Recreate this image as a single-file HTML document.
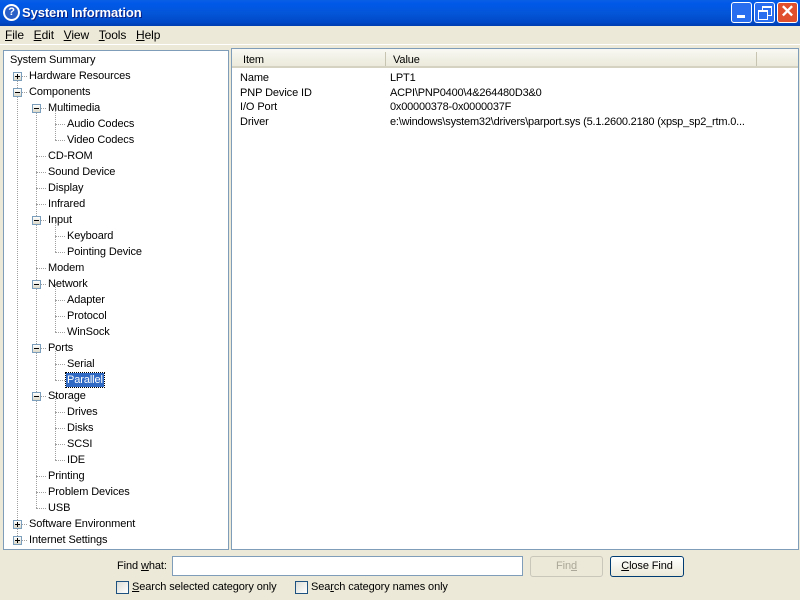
<!DOCTYPE html><html><head><style>
body{margin:0;width:800px;height:600px;overflow:hidden;background:#ece9d8;font-family:"Liberation Sans",sans-serif;font-size:11px;letter-spacing:-0.1px;position:relative}
.a{position:absolute;white-space:nowrap}
#title{left:0;top:0;width:800px;height:26px;background:linear-gradient(#0a5fe6,#0058e8 15%,#0456d8 50%,#0049c8 85%,#003cb0);}
.tb{position:absolute;top:2px;width:21px;height:21px;border:1px solid #fff;border-radius:3px;box-sizing:border-box}
.row{position:absolute;height:16px;line-height:16px}
.box{position:absolute;width:9px;height:9px;border:1px solid #7b9ebd;background:linear-gradient(#fff,#dcd8c8);box-sizing:border-box}
.box:after{content:"";position:absolute;left:1px;top:3px;width:5px;height:1px;background:#000}
.plus:before{content:"";position:absolute;left:3px;top:1px;width:1px;height:5px;background:#000}
.h{position:absolute;height:0;border-top:1px dotted #a0a0a0}
.v{position:absolute;width:0;border-left:1px dotted #a0a0a0}
.cb{position:absolute;width:13px;height:13px;border:1px solid #1c5180;background:linear-gradient(135deg,#dcdcd7,#fff);box-sizing:border-box}
u{text-decoration:underline}
</style></head><body>
<div id="title" class="a"></div>
<div class="a" style="left:3px;top:4px;width:17px;height:17px;border-radius:50%;background:#fff;"><div style="position:absolute;left:2px;top:2px;width:13px;height:13px;border-radius:50%;background:#2a5fc8;color:#fff;font-weight:bold;font-size:11px;text-align:center;line-height:13px">?</div></div>
<div class="a" style="left:22px;top:5px;color:#fff;font-size:13px;font-weight:bold;text-shadow:1px 1px #0a1e80">System Information</div>
<div class="tb" style="left:731px;background:#2a6ef0"><div style="position:absolute;left:5px;top:12px;width:8px;height:3px;background:#fff"></div></div>
<div class="tb" style="left:754px;background:#2a6ef0"><div style="position:absolute;left:7px;top:3px;width:8px;height:7px;border:1px solid #fff;border-top-width:2px"></div><div style="position:absolute;left:3px;top:7px;width:8px;height:7px;border:1px solid #fff;border-top-width:2px;background:#2a6ef0"></div></div>
<div class="tb" style="left:777px;background:#e0502c;color:#fff;font-size:17px;font-weight:bold;text-align:center;line-height:18px">✕</div>
<div class="a" style="left:5px;top:28px;font-size:12px"><u>F</u>ile&nbsp;&nbsp;&nbsp;<u>E</u>dit&nbsp;&nbsp;&nbsp;<u>V</u>iew&nbsp;&nbsp;&nbsp;<u>T</u>ools&nbsp;&nbsp;&nbsp;<u>H</u>elp</div>
<div class="a" style="left:0;top:44px;width:800px;height:1px;background:#fff"></div>
<div class="a" style="left:3px;top:50px;width:226px;height:500px;background:#fff;border:1px solid #7f9db9;box-sizing:border-box"></div>
<div class="a" style="left:231px;top:48px;width:568px;height:502px;background:#fff;border:1px solid #7f9db9;box-sizing:border-box"></div>
<div class="a" style="left:232px;top:49px;width:566px;height:19px;background:linear-gradient(#f9f8f3,#ebeadb);border-bottom:2px solid #d6d2c2;box-sizing:border-box"></div>
<div class="a" style="left:385px;top:52px;width:1px;height:14px;background:#c7c5b2"></div>
<div class="a" style="left:756px;top:52px;width:1px;height:14px;background:#c7c5b2"></div>
<div class="a" style="left:243px;top:54px">Item</div><div class="a" style="left:393px;top:54px">Value</div>
<div class="a" style="left:240px;top:71px;line-height:14.5px">Name<br>PNP Device ID<br>I/O Port<br>Driver</div>
<div class="a" style="left:390px;top:71px;line-height:14.5px;letter-spacing:-0.2px">LPT1<br>ACPI\PNP0400\4&amp;264480D3&amp;0<br>0x00000378-0x0000037F<br>e:\windows\system32\drivers\parport.sys (5.1.2600.2180 (xpsp_sp2_rtm.0...</div>
<div id="tree"></div>
<script>
var R=[[0,"System Summary",""],[1,"Hardware Resources","+"],[1,"Components","-"],[2,"Multimedia","-"],[3,"Audio Codecs"],[3,"Video Codecs"],[2,"CD-ROM"],[2,"Sound Device"],[2,"Display"],[2,"Infrared"],[2,"Input","-"],[3,"Keyboard"],[3,"Pointing Device"],[2,"Modem"],[2,"Network","-"],[3,"Adapter"],[3,"Protocol"],[3,"WinSock"],[2,"Ports","-"],[3,"Serial"],[3,"Parallel"],[2,"Storage","-"],[3,"Drives"],[3,"Disks"],[3,"SCSI"],[3,"IDE"],[2,"Printing"],[2,"Problem Devices"],[2,"USB"],[1,"Software Environment","+"],[1,"Internet Settings","+"]];
var h="";var cx=[0,17,36,55],tx=[10,29,48,67];
h+='<div class="v" style="left:17px;top:76px;height:464px"></div>';
h+='<div class="v" style="left:36px;top:108px;height:400px"></div>';
[[3,5],[10,12],[14,17],[18,20],[21,25]].forEach(function(p){h+='<div class="v" style="left:55px;top:'+(60+16*p[0])+'px;height:'+(16*(p[1]-p[0]))+'px"></div>'});
R.forEach(function(r,i){var y=60+16*i,l=r[0];
if(l>0){h+='<div class="h" style="left:'+cx[l]+'px;top:'+y+'px;width:'+(tx[l]-cx[l]-2)+'px"></div>';}
if(r[2])h+='<div class="box'+(r[2]=="+"?" plus":"")+'" style="left:'+(cx[l]-4)+'px;top:'+(y-4)+'px"></div>';
var s=r[1]=="Parallel"?'background:#316ac5;color:#fff;outline:1px dotted #000;padding:0 1px;left:'+(tx[l]-1)+'px;height:14px;line-height:14px;top:'+(y-7)+'px':'left:'+tx[l]+'px;top:'+(y-8)+'px';
h+='<div class="row" style="'+s+'">'+r[1]+'</div>';});
document.getElementById("tree").innerHTML=h;
</script>
<div class="a" style="left:117px;top:560px">Find <u>w</u>hat:</div>
<div class="a" style="left:172px;top:556px;width:351px;height:20px;background:#fff;border:1px solid #7f9db9;box-sizing:border-box"></div>
<div class="a" style="left:530px;top:556px;width:73px;height:21px;border:1px solid #c9c7ba;border-radius:3px;box-sizing:border-box;color:#aca899;text-align:center;line-height:19px">Fin<u>d</u></div>
<div class="a" style="left:610px;top:556px;width:74px;height:21px;border:1px solid #003c74;border-radius:3px;box-sizing:border-box;background:linear-gradient(#fff,#ece9d8);text-align:center;line-height:19px"><u>C</u>lose Find</div>
<div class="cb" style="left:116px;top:581px"></div><div class="a" style="left:132px;top:581px"><u>S</u>earch selected category only</div>
<div class="cb" style="left:295px;top:581px"></div><div class="a" style="left:311px;top:581px">Sea<u>r</u>ch category names only</div>
</body></html>
